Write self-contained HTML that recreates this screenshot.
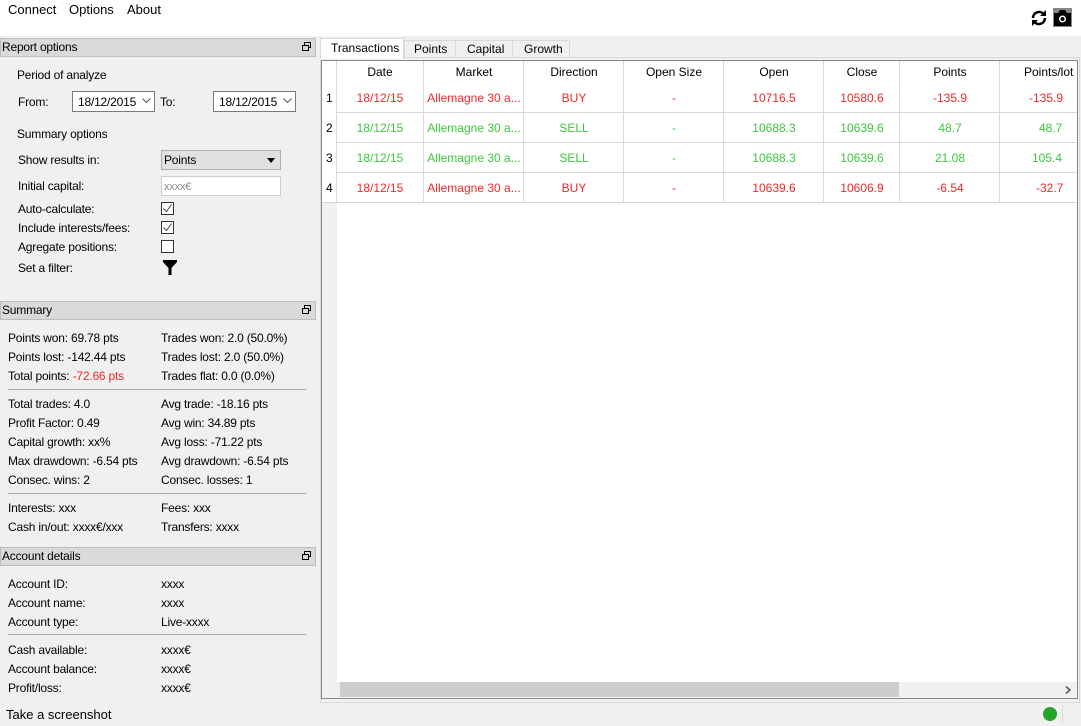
<!DOCTYPE html>
<html><head><meta charset="utf-8"><style>
*{box-sizing:border-box;margin:0;padding:0}
body{width:1081px;height:726px;overflow:hidden;background:#f0f0f0;font:12px "Liberation Sans",sans-serif;color:#000;position:relative}
.a{position:absolute;white-space:nowrap;line-height:14px}
.r{color:#f02828}.g{color:#3cc83c}
.hdr{position:absolute;left:0;width:316px;height:19px;background:#dadada;border:1px solid #bdbdbd;padding-left:1px;line-height:17px;letter-spacing:-0.2px}
.hdr .ic{position:absolute;right:4px;top:3px;width:9px;height:9px}
.sep{position:absolute;left:8px;width:298px;height:1px;background:#a8a8a8}
.cb{position:absolute;width:13px;height:13px;border:1px solid #333;background:#fff}
.cell{position:absolute;text-align:center;line-height:14px}
.vl{position:absolute;width:1px;background:#d8d8d8}
.hl{position:absolute;height:1px;background:#d8d8d8}
.lp .a{letter-spacing:-0.2px}
</style></head><body>
<div style="position:absolute;left:0;top:0;width:1081px;height:36px;background:#fff"></div>
<div class="a" style="left:8px;top:3px;font-size:13px">Connect</div>
<div class="a" style="left:69px;top:3px;font-size:13px">Options</div>
<div class="a" style="left:127px;top:3px;font-size:13px">About</div>
<svg style="position:absolute;left:1030px;top:9px" width="18" height="18" viewBox="0 0 18 18"><path d="M3 9a6 6 0 0 1 10.5-4" fill="none" stroke="#000" stroke-width="2.5"/><path d="M15 9a6 6 0 0 1-10.5 4" fill="none" stroke="#000" stroke-width="2.5"/><path d="M16 1v6h-6z M2 17v-6h6z" fill="#000"/></svg>
<svg style="position:absolute;left:1053px;top:8px" width="19" height="19" viewBox="0 0 19 19"><rect x="0" y="0" width="19" height="19" fill="#888"/><path d="M1 5h4l2-3h5l2 3h4v13H1z" fill="#000"/><circle cx="9.5" cy="11" r="3.5" fill="#fff"/><circle cx="9.5" cy="11" r="2" fill="#000"/></svg>

<div class="lp">
<!-- Report options -->
<div class="hdr" style="top:38px">Report options<svg class="ic" viewBox="0 0 9 9"><rect x="2.5" y="0.5" width="6" height="5" fill="none" stroke="#000"/><rect x="0.5" y="3.5" width="6" height="5" fill="#dadada" stroke="#000"/></svg></div>
<div class="a" style="left:17px;top:68px">Period of analyze</div>
<div class="a" style="left:18px;top:95px">From:</div>
<div style="position:absolute;left:72px;top:91px;width:83px;height:21px;background:#fff;border:1px solid #7a7a7a"></div>
<div class="a" style="left:78px;top:95px">18/12/2015</div>
<svg style="position:absolute;left:142px;top:98px" width="9" height="6" viewBox="0 0 9 6"><path d="M0.5 0.5l4 4 4-4" fill="none" stroke="#555"/></svg>
<div class="a" style="left:160px;top:95px">To:</div>
<div style="position:absolute;left:213px;top:91px;width:83px;height:21px;background:#fff;border:1px solid #7a7a7a"></div>
<div class="a" style="left:219px;top:95px">18/12/2015</div>
<svg style="position:absolute;left:283px;top:98px" width="9" height="6" viewBox="0 0 9 6"><path d="M0.5 0.5l4 4 4-4" fill="none" stroke="#555"/></svg>
<div class="a" style="left:17px;top:127px">Summary options</div>
<div class="a" style="left:18px;top:153px">Show results in:</div>
<div style="position:absolute;left:161px;top:150px;width:120px;height:20px;background:#e1e1e1;border:1px solid #adadad"></div>
<div class="a" style="left:164px;top:153px">Points</div>
<div style="position:absolute;left:267px;top:158px;border-left:4px solid transparent;border-right:4px solid transparent;border-top:5px solid #000"></div>
<div class="a" style="left:18px;top:179px">Initial capital:</div>
<div style="position:absolute;left:161px;top:176px;width:120px;height:20px;background:#fff;border:1px solid #cfcfcf"></div>
<div class="a" style="left:164px;top:180px;color:#8a8a8a;font-size:11px">xxxx€</div>
<div class="a" style="left:18px;top:202px">Auto-calculate:</div>
<div class="cb" style="left:161px;top:202px"></div><svg style="position:absolute;left:162px;top:203px" width="11" height="11" viewBox="0 0 11 11"><path d="M1.5 5.5l3 3 5-7" fill="none" stroke="#444" stroke-width="1"/></svg>
<div class="a" style="left:18px;top:221px">Include interests/fees:</div>
<div class="cb" style="left:161px;top:221px"></div><svg style="position:absolute;left:162px;top:222px" width="11" height="11" viewBox="0 0 11 11"><path d="M1.5 5.5l3 3 5-7" fill="none" stroke="#444" stroke-width="1"/></svg>
<div class="a" style="left:18px;top:240px">Agregate positions:</div>
<div class="cb" style="left:161px;top:240px"></div>
<div class="a" style="left:18px;top:261px">Set a filter:</div>
<svg style="position:absolute;left:163px;top:260px" width="14" height="15" viewBox="0 0 14 15"><path d="M0 0h14v2L8.5 8v7h-3V8L0 2z" fill="#000"/></svg>

<!-- Summary -->
<div class="hdr" style="top:301px">Summary<svg class="ic" viewBox="0 0 9 9"><rect x="2.5" y="0.5" width="6" height="5" fill="none" stroke="#000"/><rect x="0.5" y="3.5" width="6" height="5" fill="#dadada" stroke="#000"/></svg></div>
<div class="a" style="left:8px;top:331px">Points won: 69.78 pts</div>
<div class="a" style="left:161px;top:331px">Trades won: 2.0 (50.0%)</div>
<div class="a" style="left:8px;top:350px">Points lost: -142.44 pts</div>
<div class="a" style="left:161px;top:350px">Trades lost: 2.0 (50.0%)</div>
<div class="a" style="left:8px;top:369px">Total points: <span class="r">-72.66 pts</span></div>
<div class="a" style="left:161px;top:369px">Trades flat: 0.0 (0.0%)</div>
<div class="sep" style="top:389px"></div>
<div class="a" style="left:8px;top:397px">Total trades: 4.0</div>
<div class="a" style="left:161px;top:397px">Avg trade: -18.16 pts</div>
<div class="a" style="left:8px;top:416px">Profit Factor: 0.49</div>
<div class="a" style="left:161px;top:416px">Avg win: 34.89 pts</div>
<div class="a" style="left:8px;top:435px">Capital growth: xx%</div>
<div class="a" style="left:161px;top:435px">Avg loss: -71.22 pts</div>
<div class="a" style="left:8px;top:454px">Max drawdown: -6.54 pts</div>
<div class="a" style="left:161px;top:454px">Avg drawdown: -6.54 pts</div>
<div class="a" style="left:8px;top:473px">Consec. wins: 2</div>
<div class="a" style="left:161px;top:473px">Consec. losses: 1</div>
<div class="sep" style="top:493px"></div>
<div class="a" style="left:8px;top:501px">Interests: xxx</div>
<div class="a" style="left:161px;top:501px">Fees: xxx</div>
<div class="a" style="left:8px;top:520px">Cash in/out: xxxx€/xxx</div>
<div class="a" style="left:161px;top:520px">Transfers: xxxx</div>

<!-- Account details -->
<div class="hdr" style="top:547px">Account details<svg class="ic" viewBox="0 0 9 9"><rect x="2.5" y="0.5" width="6" height="5" fill="none" stroke="#000"/><rect x="0.5" y="3.5" width="6" height="5" fill="#dadada" stroke="#000"/></svg></div>
<div class="a" style="left:8px;top:577px">Account ID:</div><div class="a" style="left:161px;top:577px">xxxx</div>
<div class="a" style="left:8px;top:596px">Account name:</div><div class="a" style="left:161px;top:596px">xxxx</div>
<div class="a" style="left:8px;top:615px">Account type:</div><div class="a" style="left:161px;top:615px">Live-xxxx</div>
<div class="sep" style="top:634px"></div>
<div class="a" style="left:8px;top:643px">Cash available:</div><div class="a" style="left:161px;top:643px">xxxx€</div>
<div class="a" style="left:8px;top:662px">Account balance:</div><div class="a" style="left:161px;top:662px">xxxx€</div>
<div class="a" style="left:8px;top:681px">Profit/loss:</div><div class="a" style="left:161px;top:681px">xxxx€</div>
</div>
<div class="a" style="left:6px;top:708px;font-size:13px">Take a screenshot</div>
<div style="position:absolute;left:1043px;top:707px;width:14px;height:14px;border-radius:50%;background:#22a52a"></div>
<div style="position:absolute;left:1062px;top:705px;width:1px;height:18px;background:#d8d8d8"></div>

<!-- Tabs -->
<div style="position:absolute;left:320px;top:57px;width:760px;height:646px;border:1px solid #d9d9d9;background:#f0f0f0"></div>
<div style="position:absolute;left:320px;top:38px;width:84px;height:21px;background:#fff;border:1px solid #d9d9d9;border-bottom:none"></div>
<div class="a" style="left:331px;top:41px">Transactions</div>
<div style="position:absolute;left:404px;top:40px;width:52px;height:18px;background:#f0f0f0;border:1px solid #d9d9d9"></div>
<div class="a" style="left:414px;top:42px">Points</div>
<div style="position:absolute;left:455px;top:40px;width:58px;height:18px;background:#f0f0f0;border:1px solid #d9d9d9"></div>
<div class="a" style="left:467px;top:42px">Capital</div>
<div style="position:absolute;left:512px;top:40px;width:58px;height:18px;background:#f0f0f0;border:1px solid #d9d9d9"></div>
<div class="a" style="left:524px;top:42px">Growth</div>

<!-- Table -->
<div style="position:absolute;left:321px;top:60px;width:757px;height:639px;border:1px solid #828790;background:#fff"></div>
<div style="position:absolute;left:322px;top:61px;width:15px;height:621px;background:#f0f0f0"></div>
<div style="position:absolute;left:337px;top:61px;width:740px;height:621px;background:#fff"></div>
<div style="position:absolute;left:322px;top:61px;width:15px;height:142px;background:#fff"></div>
<div class="hl" style="left:322px;top:202px;width:755px"></div>
<div class="hl" style="left:337px;top:112px;width:740px"></div>
<div class="hl" style="left:337px;top:142px;width:740px"></div>
<div class="hl" style="left:337px;top:172px;width:740px"></div>
<div class="vl" style="left:336px;top:61px;height:142px"></div>
<div class="vl" style="left:423px;top:61px;height:142px"></div>
<div class="vl" style="left:523px;top:61px;height:142px"></div>
<div class="vl" style="left:623px;top:61px;height:142px"></div>
<div class="vl" style="left:723px;top:61px;height:142px"></div>
<div class="vl" style="left:823px;top:61px;height:142px"></div>
<div class="vl" style="left:899px;top:61px;height:142px"></div>
<div class="vl" style="left:999px;top:61px;height:142px"></div>

<div class="cell" style="left:337px;width:86px;top:65px">Date</div>
<div class="cell" style="left:424px;width:100px;top:65px">Market</div>
<div class="cell" style="left:524px;width:100px;top:65px">Direction</div>
<div class="cell" style="left:624px;width:100px;top:65px">Open Size</div>
<div class="cell" style="left:724px;width:100px;top:65px">Open</div>
<div class="cell" style="left:824px;width:76px;top:65px">Close</div>
<div class="cell" style="left:900px;width:100px;top:65px">Points</div>
<div class="cell" style="left:1000px;width:100px;top:65px;text-align:left;padding-left:24px">Points/lot</div>

<div class="a" style="left:326px;top:91px">1</div>
<div class="cell r" style="left:337px;width:86px;top:91px">18/12/15</div>
<div class="cell r" style="left:424px;width:100px;top:91px">Allemagne 30 a...</div>
<div class="cell r" style="left:524px;width:100px;top:91px">BUY</div>
<div class="cell r" style="left:624px;width:100px;top:91px">-</div>
<div class="cell r" style="left:724px;width:100px;top:91px">10716.5</div>
<div class="cell r" style="left:824px;width:76px;top:91px">10580.6</div>
<div class="cell r" style="left:900px;width:100px;top:91px">-135.9</div>
<div class="cell r" style="left:1000px;width:100px;top:91px;text-align:left;padding-left:29px">-135.9</div>

<div class="a" style="left:326px;top:121px">2</div>
<div class="cell g" style="left:337px;width:86px;top:121px">18/12/15</div>
<div class="cell g" style="left:424px;width:100px;top:121px">Allemagne 30 a...</div>
<div class="cell g" style="left:524px;width:100px;top:121px">SELL</div>
<div class="cell g" style="left:624px;width:100px;top:121px">-</div>
<div class="cell g" style="left:724px;width:100px;top:121px">10688.3</div>
<div class="cell g" style="left:824px;width:76px;top:121px">10639.6</div>
<div class="cell g" style="left:900px;width:100px;top:121px">48.7</div>
<div class="cell g" style="left:1000px;width:100px;top:121px;text-align:left;padding-left:39px">48.7</div>

<div class="a" style="left:326px;top:151px">3</div>
<div class="cell g" style="left:337px;width:86px;top:151px">18/12/15</div>
<div class="cell g" style="left:424px;width:100px;top:151px">Allemagne 30 a...</div>
<div class="cell g" style="left:524px;width:100px;top:151px">SELL</div>
<div class="cell g" style="left:624px;width:100px;top:151px">-</div>
<div class="cell g" style="left:724px;width:100px;top:151px">10688.3</div>
<div class="cell g" style="left:824px;width:76px;top:151px">10639.6</div>
<div class="cell g" style="left:900px;width:100px;top:151px">21.08</div>
<div class="cell g" style="left:1000px;width:100px;top:151px;text-align:left;padding-left:32px">105.4</div>

<div class="a" style="left:326px;top:181px">4</div>
<div class="cell r" style="left:337px;width:86px;top:181px">18/12/15</div>
<div class="cell r" style="left:424px;width:100px;top:181px">Allemagne 30 a...</div>
<div class="cell r" style="left:524px;width:100px;top:181px">BUY</div>
<div class="cell r" style="left:624px;width:100px;top:181px">-</div>
<div class="cell r" style="left:724px;width:100px;top:181px">10639.6</div>
<div class="cell r" style="left:824px;width:76px;top:181px">10606.9</div>
<div class="cell r" style="left:900px;width:100px;top:181px">-6.54</div>
<div class="cell r" style="left:1000px;width:100px;top:181px;text-align:left;padding-left:36px">-32.7</div>

<!-- scrollbar -->
<div style="position:absolute;left:322px;top:682px;width:755px;height:16px;background:#f0f0f0"></div>
<div style="position:absolute;left:340px;top:682px;width:559px;height:15px;background:#cdcdcd"></div>
<svg style="position:absolute;left:1065px;top:686px" width="6" height="8" viewBox="0 0 6 8"><path d="M1 0.5l4 3.5-4 3.5" fill="none" stroke="#555" stroke-width="1.5"/></svg>
</body></html>
